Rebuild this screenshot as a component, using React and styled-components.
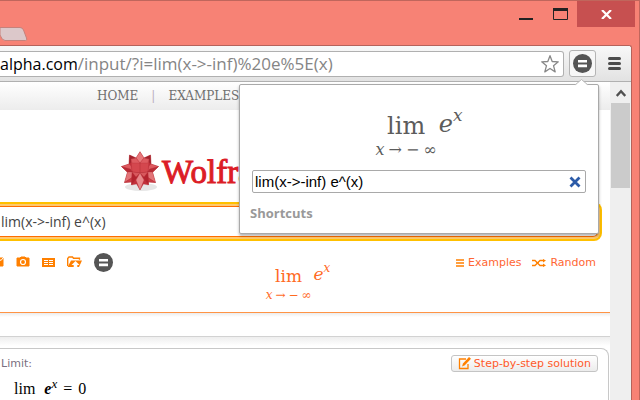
import React, { useState } from "react";
import styled, { createGlobalStyle } from "styled-components";

const GlobalStyle = createGlobalStyle`
  * {
    box-sizing: border-box;
  }

  body {
    margin: 0;
    overflow: hidden;
    background: #f58175;
    font-family: "DejaVu Sans", sans-serif;
  }
`;

const BrowserWindow = styled.div`
  display: flex;
  flex-direction: column;
  height: 100vh;
  overflow: hidden;
  padding-right: 7px;
  background: #f78275;
  border-top: 1px solid #c0665c;
  border-right: 1px solid #c0665c;
`;

const TitleBar = styled.header`
  display: flex;
  justify-content: space-between;
  flex: none;
  height: 44px;
`;

const TabShape = styled.svg`
  display: block;
  margin-top: 25px;
`;

const WindowButtons = styled.div`
  display: flex;
  align-items: flex-start;
  margin-right: -3px;
`;

const WindowButton = styled.button`
  display: flex;
  align-items: center;
  justify-content: center;
  width: ${({ $close }) => ($close ? "58px" : "34px")};
  height: 26px;
  padding: 0;
  border: 0;
  background: ${({ $close }) => ($close ? "#c75050" : "transparent")};
`;

const Frame = styled.div`
  display: flex;
  flex-direction: column;
  flex: 1;
  min-height: 0;
  border-top: 1px solid #b5625a;
  border-right: 1px solid #b5625a;
  border-top-right-radius: 3px;
  background: #fff;
`;

const Toolbar = styled.div`
  display: flex;
  align-items: center;
  flex: none;
  gap: 5px;
  height: 36px;
  padding-right: 10px;
  border-bottom: 1px solid #b0b0b0;
  border-top-right-radius: 3px;
  background: linear-gradient(#f8f8f8, #e2e2e2);
`;

const AddressBar = styled.label`
  display: flex;
  align-items: center;
  flex: 1;
  height: 26px;
  padding-right: 4px;
  border: 1px solid #b0b0b0;
  border-left: 0;
  border-radius: 0 3px 3px 0;
  background: #fff;
  color: #000;
  font: 16px "Open Sans", sans-serif;
`;

const AddressInput = styled.input`
  flex: 1;
  min-width: 0;
  padding: 0;
  border: 0;
  outline: 0;
  background: transparent;
  color: #858585;
  font: 17px "Open Sans", sans-serif;
`;

const IconButton = styled.button`
  display: flex;
  align-items: center;
  justify-content: center;
  padding: 0;
  border: 0;
  background: transparent;
`;

const ExtensionAnchor = styled.div`
  position: relative;
  margin-right: 7px;
`;

const ExtensionButton = styled(IconButton)`
  width: 27px;
  height: 27px;
  border: 1px solid #b4b4b4;
  border-radius: 3px;
  background: #f7f7f7;
`;

const Popup = styled.section`
  position: absolute;
  z-index: 2;
  top: 34px;
  right: -3px;
  width: 360px;
  padding: 25px 12px 10px;
  border: 1px solid #a9a9a9;
  border-radius: 2px;
  background: #fff;
  box-shadow: 0 2px 3px rgba(0, 0, 0, 0.3);
`;

const PopupArrow = styled.svg`
  position: absolute;
  top: -6px;
  right: 10px;
`;

const PopupField = styled.div`
  display: flex;
  align-items: center;
  height: 23px;
  margin-top: 12px;
  padding: 0 4px 0 2px;
  border: 1px solid #a9a9a9;
  border-radius: 2px;
`;

const PopupInput = styled.input`
  flex: 1;
  min-width: 0;
  padding: 0;
  border: 0;
  outline: 0;
  color: #000;
  font: 15px "Liberation Sans", sans-serif;
`;

const PopupHeading = styled.h2`
  margin: 10px 0 0 -2px;
  color: #999;
  font: bold 13px/20px "Open Sans", sans-serif;
`;

const Formula = styled.div`
  display: flex;
  align-items: flex-start;
  justify-content: center;
  color: ${({ $small }) => ($small ? "#ff6a1f" : "#5c5c5c")};
  font: ${({ $small }) => ($small ? "17px/20px" : "24px/32px")} "DejaVu Serif", serif;
`;

const LimitStack = styled.span`
  display: flex;
  flex-direction: column;
  align-items: center;
`;

const LimitRange = styled.span`
  display: flex;
  gap: ${({ $small }) => ($small ? "3px" : "4px")};
  font-size: ${({ $small }) => ($small ? "12px" : "16px")};
  line-height: ${({ $small }) => ($small ? "18px" : "16px")};
`;

const Power = styled.i`
  display: flex;
  align-items: flex-start;
  margin: -2px 0 0 2px;

  sup {
    font-size: ${({ $small }) => ($small ? "12px" : "17px")};
    line-height: ${({ $small }) => ($small ? "8px" : "14px")};
  }
`;

const Viewport = styled.div`
  display: flex;
  flex: 1;
  min-height: 0;
`;

const Page = styled.main`
  display: flex;
  flex-direction: column;
  flex: 1;
  min-width: 0;
  overflow: hidden;
`;

const SiteNav = styled.nav`
  display: flex;
  align-items: center;
  flex: none;
  gap: 13px;
  height: 28px;
  padding-left: 97px;
  background: linear-gradient(#fff, #ececec);
  color: #bbb0c0;
  font: 12px "DejaVu Serif", serif;

  a {
    color: #6f6f6f;
    text-decoration: none;
  }
`;

const Brand = styled.div`
  display: flex;
  align-items: center;
  flex: none;
  gap: 2px;
  height: 92px;
  padding: 32px 0 0 120px;
  color: #dc1d27;
  font: 33px "Liberation Serif", serif;
  -webkit-text-stroke: 1px #dc1d27;
`;

const QueryBox = styled.div`
  flex: none;
  height: 39px;
  margin-right: 8px;
  border: 2px solid #ffc000;
  border-left: 0;
  border-radius: 0 8px 8px 0;
  background: #ffc96e;
  padding: 2px 2px 2px 0;
`;

const QueryInput = styled.input`
  display: block;
  width: 100%;
  height: 31px;
  padding: 0 0 0 1px;
  border: 1px solid #ff6d00;
  border-left: 0;
  border-radius: 0 5px 5px 0;
  outline: 0;
  color: #444;
  font: 14px "Open Sans", sans-serif;
`;

const ActionRow = styled.div`
  display: grid;
  grid-template-columns: 1fr auto 1fr;
  align-items: flex-start;
  flex: none;
  height: 72px;
  padding: 11px 14px 0 0;
  border-bottom: 1px solid #ff9445;
`;

const InputTools = styled.div`
  display: flex;
  align-items: center;
  gap: 12px;
  height: 20px;
  margin-left: -10px;
`;

const QuickLinks = styled.div`
  display: flex;
  align-items: center;
  justify-content: flex-end;
  gap: 11px;
  height: 21px;
`;

const QuickLink = styled.a`
  display: flex;
  align-items: center;
  gap: 4px;
  color: #ff6633;
  font: 11px "DejaVu Sans", sans-serif;
  text-decoration: none;
`;

const PreviewFormula = styled.div`
  margin-top: 14px;
`;

const Spacer = styled.div`
  flex: none;
  height: 24px;
  border-bottom: 1px solid #d2d2d2;
  background: linear-gradient(#ececec, #fff 4px);
`;

const Results = styled.div`
  flex: 1;
  padding: 11px 1px 0 0;
  background: linear-gradient(#eee, #fff 9px);
`;

const Pod = styled.section`
  height: 100%;
  padding: 6px 10px 0 1px;
  border: 1px solid #c8c8c8;
  border-width: 1px 1px 0 0;
  border-radius: 0 8px 0 0;
  background: #fff;
`;

const PodHeader = styled.div`
  display: flex;
  align-items: center;
  justify-content: space-between;

  h2 {
    margin: 0;
    color: #7a6f80;
    font: 11px "DejaVu Sans", sans-serif;
  }
`;

const StepButton = styled.button`
  display: flex;
  align-items: center;
  gap: 3px;
  height: 17px;
  padding: 0 6px;
  border: 1px solid #c4c4c4;
  border-radius: 3px;
  background: linear-gradient(#fff, #ececec);
  color: #ff5a2a;
  font: 11px "DejaVu Sans", sans-serif;
`;

const PodResult = styled.p`
  display: flex;
  gap: 6px;
  margin: 7px 0 0 13px;
  color: #000;
  font: 16px/20px "Liberation Serif", serif;

  i {
    margin-left: 3px;
    font-weight: bold;
  }

  sup {
    font-size: 13px;
    font-weight: normal;
    line-height: 1px;
  }
`;

const Scrollbar = styled.div`
  flex: none;
  width: 21px;
  padding: 0 1px;
  background: #efefef;
`;

const ScrollUp = styled(IconButton)`
  width: 100%;
  height: 21px;
`;

const ScrollThumb = styled.div`
  height: 85px;
  background: #cbcbcb;
`;

const EqualsIcon = ({ size = 19 }) => (
  <svg width={size} height={size} viewBox="0 0 19 19">
    <circle cx="9.5" cy="9.5" r="9.5" fill="#555" />
    <path d="M5 6h9v2.6H5zM5 10.6h9v2.6H5z" fill="#fff" />
  </svg>
);

const Spikey = () => (
  <svg width="40" height="42" viewBox="0 0 40 42">
    <ellipse cx="21" cy="36" rx="16" ry="4" fill="#e6e6e6" />
    <g stroke="#b5323a" strokeWidth="0.3" strokeLinejoin="round">
      <path
        d="M20 .7L24 7l6.500-3 .5 9 7.500 2.500-6 5.500 3 10.500-7-.5V34l-5-1-3.500 6-3.500-6-5 1v-3l-7 .5 3-10.500-6-5.500L9 13l.5-9L16 7z"
        fill="#c22f3a"
      />
      {/* upper spikes */}
      <path d="M20 .7L24 7l-4 5-4-5z" fill="#e8787b" />
      <path d="M9.500 4L16 7l-3 3-4 3zM30.500 4L24 7l3 3 4 3z" fill="#a3222d" />
      <path d="M11 8l9 4v10l-8-1zM29 8l-9 4v10l8-1z" fill="#d4474e" />
      <path d="M20 12l4-5 5 1-1 4zM20 12l-4-5-5 1 1 4z" fill="#dd5b60" />
      {/* side spikes */}
      <path d="M1.500 15.500L9 13l2 2 1 6-5 0zM38.500 15.500L31 13l-2 2-1 6 5 0z" fill="#de5a60" />
      <path d="M1.500 15.500l6 5.500 5 0-2-3zM38.500 15.500l-6 5.500-5 0 2-3z" fill="#b82a35" />
      {/* lower spikes */}
      <path d="M4.500 31.500l3-10.500 5 0 2 4zM35.500 31.500l-3-10.500-5 0-2 4z" fill="#e37478" />
      <path d="M4.500 31.500l10-6.500-3 6zM35.500 31.500l-10-6.500 3 6z" fill="#cb3d46" />
      <path d="M12 21l8 1-4 6-4.500 6 0-5zM28 21l-8 1 4 6 4.500 6 0-5z" fill="#b4232e" />
      <path d="M12 21l8 1-4 4zM28 21l-8 1 4 4z" fill="#d9585d" />
      <path d="M20 22l4 7-4 10-4-10z" fill="#e8888b" />
    </g>
  </svg>
);

const CameraIcon = () => (
  <svg width="14" height="12" viewBox="0 0 14 12">
    <path d="M1 2h3l1-1h4l1 1h3v8H1z" fill="#ff8000" stroke="#ff8000" strokeLinejoin="round" />
    <circle cx="7" cy="6" r="2.500" fill="none" stroke="#fff" strokeWidth="1.200" />
  </svg>
);

const PictureIcon = () => (
  <svg width="14" height="12" viewBox="0 0 14 12">
    <path d="M1 2h12v8H1z" fill="#ff8000" stroke="#ff8000" strokeLinejoin="round" />
    <path d="M9 3l2 1.500 2-2.500" fill="none" stroke="#fff" />
  </svg>
);

const TableIcon = () => (
  <svg width="13" height="9" viewBox="0 0 13 9">
    <path d="M0 0h13v9H0z" fill="#ff8000" />
    <path d="M2 2.500h4M7 2.500h4M2 4.500h4M7 4.500h4M2 6.500h4M7 6.500h4" stroke="#fff" />
  </svg>
);

const FolderIcon = () => (
  <svg width="15" height="13" viewBox="0 0 15 13">
    <path d="M.7 10V2.500L2 1h3.500l1 1.200h6v1.600" fill="none" stroke="#ff8000" strokeWidth="1.400" />
    <path d="M4 4.500h11L12 11H.700z" fill="#ff8000" />
    <path d="M8.500 5l4 4h-2.200v4H6.700V9H4.500z" fill="#fff" />
  </svg>
);

const LimitFormula = ({ small }) => (
  <Formula $small={small}>
    <LimitStack>
      <span>lim</span>
      <LimitRange $small={small}>
        <i>x</i>
        <span>→</span>
        <span>−</span>
        <span>∞</span>
      </LimitRange>
    </LimitStack>
    <Power $small={small}>
      e<sup>x</sup>
    </Power>
  </Formula>
);

const ExtensionPopup = ({ query, setQuery }) => (
  <Popup>
    <PopupArrow width="13" height="7" viewBox="0 0 13 7">
      <path d="M0 6.500L6.500 .5 13 6.500V7H0z" fill="#fff" />
      <path d="M0 6L6.500 .5 13 6" fill="none" stroke="#bbb" />
    </PopupArrow>
    <LimitFormula />
    <PopupField>
      <PopupInput
        aria-label="Expression"
        value={query}
        onChange={(e) => setQuery(e.target.value)}
      />
      <IconButton aria-label="Clear" onClick={() => setQuery("")}>
        <svg width="12" height="12" viewBox="0 0 12 12">
          <path d="M1.500 1.500l9 9M10.500 1.500l-9 9" stroke="#2c5ba8" strokeWidth="2.800" />
        </svg>
      </IconButton>
    </PopupField>
    <PopupHeading>Shortcuts</PopupHeading>
  </Popup>
);

const App = () => {
  const [address, setAddress] = useState("/input/?i=lim(x->-inf)%20e%5E(x)");
  const [query, setQuery] = useState("lim(x->-inf) e^(x)");

  return (
    <BrowserWindow>
      <GlobalStyle />
      <TitleBar>
        <TabShape width="28" height="16" viewBox="0 0 28 16">
          <path d="M0 1.500h20q2.500 0 3.500 2.500l3 8q1 2.500-1 2.500H5Q2 14.500 0 9z" fill="#dcc8ca" stroke="#c5827c" />
        </TabShape>
        <WindowButtons>
          <WindowButton aria-label="Minimize">
            <svg width="14" height="14" viewBox="0 0 14 14">
              <path d="M0 11h14v2H0z" fill="#222" />
            </svg>
          </WindowButton>
          <WindowButton aria-label="Maximize">
            <svg width="15" height="12" viewBox="0 0 15 12">
              <path d="M.5 1.500h14v10H.5zM0 1.500h15" fill="none" stroke="#222" />
              <path d="M0 0h15v3H0z" fill="#222" />
            </svg>
          </WindowButton>
          <WindowButton $close aria-label="Close">
            <svg width="11" height="9" viewBox="0 0 11 9">
              <path d="M1 0l9 9M10 0L1 9" stroke="#fff" strokeWidth="2.200" />
            </svg>
          </WindowButton>
        </WindowButtons>
      </TitleBar>

      <Frame>
        <Toolbar>
          <AddressBar>
            <span>alpha.com</span>
            <AddressInput
              aria-label="Address"
              value={address}
              onChange={(e) => setAddress(e.target.value)}
            />
            <IconButton aria-label="Bookmark">
              <svg width="18" height="18" viewBox="0 0 18 18">
                <path
                  d="M9 .7l2.200 5.800 6.100.3-4.800 3.900 1.700 6.200L9 13.500l-5.200 3.400 1.700-6.200L.7 6.800l6.100-.3z"
                  fill="#fff"
                  stroke="#888"
                  strokeWidth="1.300"
                  strokeLinejoin="round"
                />
              </svg>
            </IconButton>
          </AddressBar>
          <ExtensionAnchor>
            <ExtensionButton aria-label="Equation preview">
              <EqualsIcon />
            </ExtensionButton>
            <ExtensionPopup query={query} setQuery={setQuery} />
          </ExtensionAnchor>
          <IconButton aria-label="Menu">
            <svg width="13" height="13" viewBox="0 0 13 13">
              <path d="M1.500 1.500h10M1.500 6.500h10M1.500 11.500h10" stroke="#4c4c4c" strokeWidth="3" strokeLinecap="round" />
            </svg>
          </IconButton>
        </Toolbar>

        <Viewport>
          <Page>
            <SiteNav>
              <a href="#home">HOME</a>
              <span>|</span>
              <a href="#examples">EXAMPLES</a>
            </SiteNav>
            <Brand>
              <Spikey />
              <span>Wolfram</span>
            </Brand>
            <QueryBox>
              <QueryInput
                aria-label="Query"
                value={query}
                onChange={(e) => setQuery(e.target.value)}
              />
            </QueryBox>
            <ActionRow>
              <InputTools>
                <IconButton aria-label="Picture">
                  <PictureIcon />
                </IconButton>
                <IconButton aria-label="Camera">
                  <CameraIcon />
                </IconButton>
                <IconButton aria-label="Data">
                  <TableIcon />
                </IconButton>
                <IconButton aria-label="Upload">
                  <FolderIcon />
                </IconButton>
                <IconButton aria-label="Preview">
                  <EqualsIcon />
                </IconButton>
              </InputTools>
              <PreviewFormula>
                <LimitFormula small />
              </PreviewFormula>
              <QuickLinks>
                <QuickLink href="#examples">
                  <svg width="8" height="8" viewBox="0 0 8 8">
                    <path d="M0 1h8M0 4h8M0 7h8" stroke="#ff8000" strokeWidth="1.500" />
                  </svg>
                  Examples
                </QuickLink>
                <QuickLink href="#random">
                  <svg width="14" height="8" viewBox="0 0 14 8">
                    <path d="M0 1.500h3l5 5h4M0 6.500h3l5-5h4" fill="none" stroke="#ff8000" strokeWidth="1.300" />
                    <path d="M11 0l3 1.500L11 3.500zM11 4.500l3 2L11 8z" fill="#ff8000" />
                  </svg>
                  Random
                </QuickLink>
              </QuickLinks>
            </ActionRow>
            <Spacer />
            <Results>
              <Pod>
                <PodHeader>
                  <h2>Limit:</h2>
                  <StepButton>
                    <svg width="13" height="13" viewBox="0 0 13 13">
                      <path d="M8 2H1.500v9.500H10V7" fill="none" stroke="#ff8000" strokeWidth="1.300" />
                      <path d="M4 9.500l1-3L11 0l2 1.700-6.200 6.600z" fill="#ff8000" />
                    </svg>
                    Step-by-step solution
                  </StepButton>
                </PodHeader>
                <PodResult>
                  <span>lim</span>
                  <i>
                    e<sup>x</sup>
                  </i>
                  <span>=</span>
                  <span>0</span>
                </PodResult>
              </Pod>
            </Results>
          </Page>
          <Scrollbar>
            <ScrollUp aria-label="Scroll up">
              <svg width="10" height="8" viewBox="0 0 10 8">
                <path d="M.7 7L5 2.200 9.300 7" fill="none" stroke="#505050" strokeWidth="2.400" />
              </svg>
            </ScrollUp>
            <ScrollThumb />
          </Scrollbar>
        </Viewport>
      </Frame>
    </BrowserWindow>
  );
};

export default App;
